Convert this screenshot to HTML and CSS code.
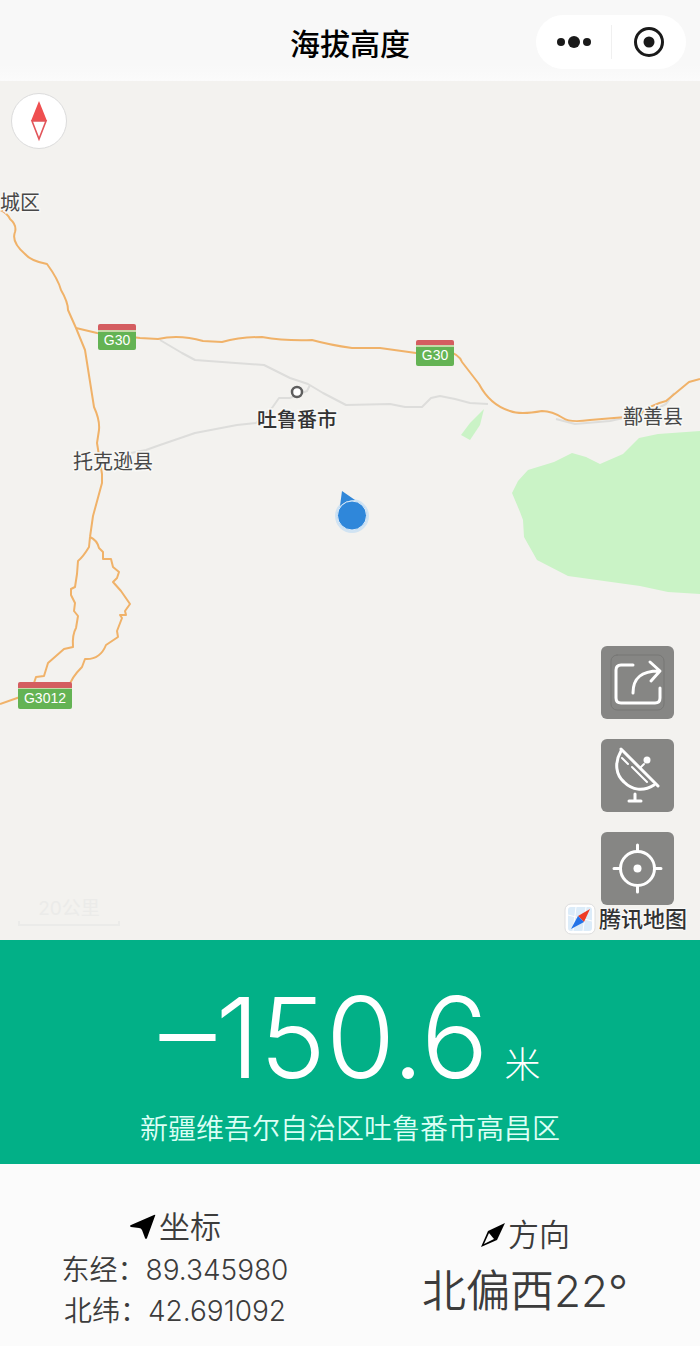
FILE: index.html
```html
<!DOCTYPE html>
<html lang="zh-CN">
<head>
  <meta charset="UTF-8">
  <meta name="viewport" content="width=device-width, initial-scale=1.0">
  <title>海拔高度</title>
  <link rel="stylesheet" href="styles.css">
</head>
<body>
  <header class="navbar">
    <h1>海拔高度</h1>
    <div class="capsule">
      <button type="button" aria-label="更多">
        <svg width="36" height="14" viewBox="0 0 36 14" fill="#1a1a1a">
          <circle cx="5" cy="7" r="4"/>
          <circle cx="18" cy="7" r="6"/>
          <circle cx="31" cy="7" r="4"/>
        </svg>
      </button>
      <button type="button" aria-label="关闭">
        <svg width="32" height="32" viewBox="0 0 32 32">
          <circle cx="16" cy="16" r="13.5" fill="none" stroke="#1a1a1a" stroke-width="3"/>
          <circle cx="16" cy="16" r="5.5" fill="#1a1a1a"/>
        </svg>
      </button>
    </div>
  </header>

  <main class="map">
    <svg class="map-canvas" viewBox="0 81 700 859" preserveAspectRatio="xMidYMid slice">
      <!-- parks -->
      <path class="park" d="M700 431 L658 434 L639 438 L623 454 L600 464 L586 457 L572 453 L554 462 L528 470 L518 481 L512 493 L520 512 L523 520 L524 537 L537 560 L568 576 L640 586 L668 592 L700 594Z"/>
      <path class="park" d="M484 409 L480 425 L470 440 L461 435 L470 423Z"/>

      <!-- minor roads -->
      <path class="road-minor" d="M160 340 L182 353 L195 360 L264 365 L290 378 L308 384 L323 393 L346 405 L390 404 L405 407 L422 407 L431 398 L440 396 L455 399 L470 403 L488 404"/>
      <path class="road-minor" d="M310 385 L307 391 L290 398 L279 398 L272 408 L256 423 L237 425 L195 433 L160 445 L146 450 L131 453"/>
      <path class="road-minor" d="M556 419 L575 424 L610 421 L650 412 L666 404 L674 393"/>

      <!-- expressways -->
      <path class="road" d="M0 210 Q7 213 10 219 Q17 225 15 232 Q11 242 25 254 Q31 261 47 264 Q58 279 61 290 Q68 302 68 310 L76 328 L85 350 L94 407 Q100 420 99 430 L97 443 L102 474 L102 483 L93 516 L90 537"/>
      <path class="road" d="M76 328 L97 333 L140 338 L158 339 Q179 334 203 341 L222 342 Q240 337 262 337 Q285 341 312 340 Q330 345 352 348 L380 348 L416 353 L447 351 Q459 354 462 362 L479 384 Q490 405 510 411 Q520 415 542 411 Q552 411 563 418 Q570 423 590 420 L638 416 Q649 405 666 401 L689 382 L700 379"/>
      <path class="road" d="M90 537 L89 547 Q83 557 78 561 L77 574 L75 587 L71 589 L71 595 L75 603 L74 611 L78 616 L76 628 Q72 635 73 647 L64 649 L48 663 L44 676 L36 677 L33 686"/>
      <path class="road" d="M90 537 Q97 540 99 548 L103 552 L103 559 L111 559 L113 567 L119 572 L117 578 L113 582 L121 591 L130 604 L125 611 L126 615 L120 615 L122 618 L117 631 L118 637 L106 645 Q100 660 85 659 L82 667 Q71 678 69 687"/>
      <path class="road" d="M0 704 L20 697"/>

      <!-- road signs -->
      <g class="sign">
        <path fill="#64b354" d="M98 332h38v16a2 2 0 0 1-2 2h-34a2 2 0 0 1-2-2z"/>
        <path fill="#d45d60" d="M100 324h34a2 2 0 0 1 2 2v4h-38v-4a2 2 0 0 1 2-2z"/>
        <path fill="#c5d9a8" d="M98 330h38v2h-38z"/>
        <text x="117" y="345">G30</text>
      </g>
      <g class="sign">
        <path fill="#64b354" d="M416 347h38v17a2 2 0 0 1-2 2h-34a2 2 0 0 1-2-2z"/>
        <path fill="#d45d60" d="M418 340h34a2 2 0 0 1 2 2v3h-38v-3a2 2 0 0 1 2-2z"/>
        <path fill="#c5d9a8" d="M416 345h38v2h-38z"/>
        <text x="435" y="360">G30</text>
      </g>
      <g class="sign">
        <path fill="#64b354" d="M18 689h54v18a2 2 0 0 1-2 2h-50a2 2 0 0 1-2-2z"/>
        <path fill="#d45d60" d="M20 682h50a2 2 0 0 1 2 2v4h-54v-4a2 2 0 0 1 2-2z"/>
        <path fill="#c5d9a8" d="M18 688h54v1h-54z"/>
        <text x="45" y="703">G3012</text>
      </g>

      <!-- places -->
      <text class="place" x="20" y="210">城区</text>
      <text class="place" x="113" y="469">托克逊县</text>
      <text class="place" x="653" y="424">鄯善县</text>
      <text class="place city" x="297" y="427">吐鲁番市</text>
      <circle cx="297" cy="392" r="5" fill="#fff" stroke="#5e5e5e" stroke-width="2.5"/>

      <!-- current position -->
      <circle cx="352" cy="516" r="17" fill="#b9d8f4" opacity=".6"/>
      <path d="M342 491 L355 500 Q346 500 340 506Z" fill="#3187d8"/>
      <circle cx="352" cy="515.5" r="14.5" fill="#2f87da" stroke="#d9e9f8"/>
    </svg>

    <button class="compass" type="button" aria-label="指北针">
      <svg width="18" height="42" viewBox="0 0 18 42">
        <path d="M9 1 L17 21 L9 41 L1 21Z" fill="#fff"/>
        <path d="M9 1 L17 21 H1Z" fill="#ef4f50"/>
        <path d="M2 21 L9 39 L16 21Z" fill="none" stroke="#e2555a" stroke-width="1.6"/>
      </svg>
    </button>

    <div class="tools">
      <button type="button" aria-label="分享">
        <svg width="73" height="73" viewBox="0 0 73 73">
          <rect x="10" y="9" width="53" height="55" rx="6" stroke="#777775" stroke-width="1"/>
          <path d="M32 19 H20 Q15 19 15 24 V52 Q15 57 20 57 H54 Q59 57 59 52 V42"/>
          <path d="M32 47 C32 31 41 25 58 25 M49 16 L59 25 L50 35"/>
        </svg>
      </button>
      <button type="button" aria-label="卫星">
        <svg width="73" height="73" viewBox="0 0 73 73">
          <path d="M20 10 L57 47"/>
          <path d="M20 12 C13 24 15 36 23 43 C31 51 42 53 53 46"/>
          <path d="M21 19 L27 25 M31 28 L46 43" stroke-width="2"/>
          <path d="M39 29 L43 25" stroke-width="2"/>
          <circle cx="46" cy="21" r="3.5" fill="#fff" stroke="none"/>
          <path d="M34 55 V62 M28 62 H40"/>
        </svg>
      </button>
      <button type="button" aria-label="定位">
        <svg width="73" height="73" viewBox="0 0 73 73">
          <circle cx="36.5" cy="36.5" r="17"/>
          <circle cx="36.5" cy="36.5" r="4" fill="#fff" stroke="none"/>
          <path d="M36.500 13 V19 M36.500 54 V60 M13 36.500 H19 M54 36.500 H60"/>
        </svg>
      </button>
    </div>

    <div class="brand">
      <svg width="32" height="32" viewBox="0 0 32 32">
        <rect x="1" y="1" width="30" height="30" rx="6" fill="#fff" stroke="#dedede"/>
        <rect x="4" y="4" width="24" height="24" rx="3" fill="#dcecf9"/>
        <path d="M4 12 L28 18 M12 4 L9 28 M22 4 L19 28" stroke="#fff" stroke-width="1"/>
        <path d="M26 6 L20 19 L14 13Z" fill="#ee3b24"/>
        <path d="M7 26 L14 13 L20 19Z" fill="#2373e8"/>
      </svg>
      <span>腾讯地图</span>
    </div>

    <div class="scale">
      <span>20公里</span>
      <svg width="102" height="6" viewBox="0 0 102 6">
        <path d="M1 0 V4 H101 V0" fill="none" stroke="#ebebe9" stroke-width="2"/>
      </svg>
    </div>
  </main>

  <section class="altitude">
    <p class="altitude-value">–150.6<span class="unit">米</span></p>
    <p class="address">新疆维吾尔自治区吐鲁番市高昌区</p>
  </section>

  <section class="info">
    <div class="info-col">
      <h2>
        <svg width="28" height="28" viewBox="0 0 28 28">
          <path d="M2 12 L25 2 Q27 1 26 3 L18 25 Q17 27 16 25 L13 17 Q12 15 10 15 L2 14 Q0 13 2 12Z"/>
        </svg>
        <span>坐标</span>
      </h2>
      <p>东经：89.345980</p>
      <p>北纬：42.691092</p>
    </div>
    <div class="info-col">
      <h2>
        <svg width="26" height="26" viewBox="0 0 26 26">
          <path d="M25 1 L8 9 L1 25 L17 18Z"/>
          <path d="M9 11 L4 22 L14 17Z" fill="#fbfbfb"/>
        </svg>
        <span>方向</span>
      </h2>
      <p class="heading">北偏西22°</p>
    </div>
  </section>
</body>
</html>
```
FILE: styles.css
```css
* {
  box-sizing: border-box;
}
body {
  margin: 0;
  min-height: 100vh;
  display: flex;
  flex-direction: column;
  font-family: Inter, "Noto Sans CJK SC", sans-serif;
  color: #3c3c3c;
  background: #fbfbfb;
}
h1, h2, p {
  margin: 0;
}
button {
  padding: 0;
  border: none;
  cursor: pointer;
}
svg {
  display: block;
}

.navbar {
  display: grid;
  grid-template-columns: 1fr auto 1fr;
  align-items: center;
  padding: 15px 14px 12px;
  background: linear-gradient(#f8f8f8 80%, #fbfbfb);
}
.navbar h1 {
  grid-column: 2;
  padding-top: 4px;
  font-size: 30px;
  line-height: 50px;
  font-weight: 500;
  color: #000;
}
.capsule {
  justify-self: end;
  display: flex;
  padding: 10px 0;
  border-radius: 27px;
  background: #fff;
}
.capsule button {
  display: flex;
  justify-content: center;
  align-items: center;
  width: 75px;
  height: 34px;
  background: none;
}
.capsule button + button {
  border-left: 1px solid #f0f0f0;
}

.map {
  position: relative;
  flex: 1;
  min-height: 600px;
  overflow: hidden;
  background: #f3f2ef;
}
.map-canvas {
  position: absolute;
  width: 100%;
  height: 100%;
}
.park {
  fill: #caf3c6;
}
.road, .road-minor {
  fill: none;
  stroke-linejoin: round;
}
.road {
  stroke: #f0b269;
  stroke-width: 2;
}
.road-minor {
  stroke: #dddddb;
  stroke-width: 2;
}
.sign text {
  font-family: "Liberation Sans", Arial, sans-serif;
  font-size: 14px;
  fill: #fff;
  text-anchor: middle;
}
.place {
  font-size: 20px;
  fill: #484848;
  stroke: #f8f8f6;
  stroke-width: 3px;
  paint-order: stroke;
  text-anchor: middle;
}
.city {
  font-weight: 500;
  fill: #333;
}

.compass {
  position: absolute;
  left: 11px;
  top: 12px;
  display: flex;
  justify-content: center;
  align-items: center;
  width: 56px;
  height: 56px;
  border: 1px solid #dcdcdc;
  border-radius: 50%;
  background: #fff;
}
.tools {
  position: absolute;
  right: 26px;
  bottom: 35px;
  display: flex;
  flex-direction: column;
  gap: 20px;
}
.tools button {
  border-radius: 6px;
  background: #868684;
}
.tools svg {
  fill: none;
  stroke: #fff;
  stroke-width: 3;
  stroke-linecap: round;
  stroke-linejoin: round;
}
.brand {
  position: absolute;
  right: 13px;
  bottom: 5px;
  display: flex;
  align-items: center;
  gap: 3px;
  font-size: 22px;
  line-height: 32px;
  font-weight: 500;
  color: #333;
  text-shadow: 0 0 2px #fff, 0 0 2px #fff, 0 0 3px #fff;
}
.scale {
  position: absolute;
  left: 18px;
  bottom: 13px;
  font-size: 19px;
  line-height: 24px;
  text-align: center;
  color: #ebebe9;
}

.altitude {
  padding: 29px 16px 15px;
  text-align: center;
  color: #fff;
  background: #02b087;
}
.altitude-value {
  display: flex;
  justify-content: center;
  align-items: baseline;
  gap: 16px;
  font-size: 112px;
  line-height: 136px;
  font-weight: 300;
}
.unit {
  font-size: 36px;
  line-height: 44px;
}
.address {
  padding-top: 4px;
  font-size: 28px;
  line-height: 40px;
  font-weight: 350;
  color: #dcfff5;
}

.info {
  display: grid;
  grid-template-columns: 1fr 1fr;
  align-items: center;
  padding: 40px 0 14px;
  font-size: 28px;
  font-weight: 350;
}
.info-col {
  text-align: center;
}
.info h2 {
  display: flex;
  justify-content: center;
  align-items: center;
  gap: 2px;
  font-size: 31px;
  line-height: 46px;
  font-weight: 350;
}
.info p {
  line-height: 41px;
}
.info .heading {
  font-size: 44px;
  line-height: 66px;
}
```
